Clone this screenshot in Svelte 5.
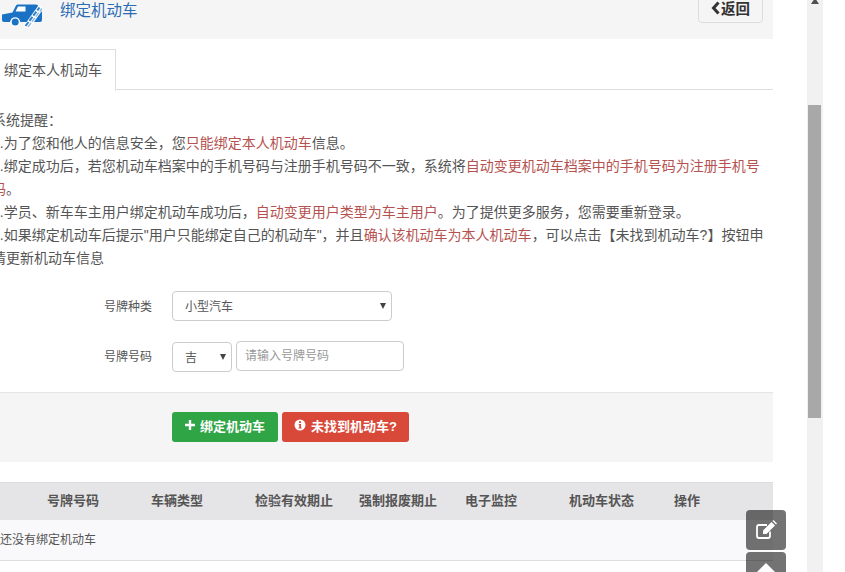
<script>
  const columns = [
    { label: '号牌号码', width: 104 },
    { label: '车辆类型', width: 104 },
    { label: '检验有效期止', width: 104 },
    { label: '强制报废期止', width: 106 },
    { label: '电子监控', width: 104 },
    { label: '机动车状态', width: 105 },
    { label: '操作', width: 80 },
  ];
</script>

<div class="page">
  <main class="main">
    <header class="head">
      <svg class="car" viewBox="0 0 42 26" aria-hidden="true">
        <path fill="#1b72c4" d="M0 12.500 10.500 10.500 14 3.500Q14.500 2.500 16 2.500H34q1.500 0 2.500 1.500L40 10v8q0 2-2 2H18.500a5.500 5.500 0 0 0-10.500 0H2q-2 0-2-2z"/>
        <path fill="#fff" d="M13.500 9.500 16 4.500h7.500v5z"/>
        <circle cx="13.200" cy="20" r="4.800" fill="#fff"/>
        <circle cx="13.200" cy="20" r="3.500" fill="#1b72c4"/>
        <path fill="none" stroke="#fff" stroke-width="6" d="M24 26 39 5"/>
        <path fill="none" stroke="#2f80c9" stroke-width="2" stroke-dasharray="5 1.500" d="M23.500 24 37.500 5.500"/>
        <path fill="none" stroke="#8fbce4" stroke-width="1.500" stroke-dasharray="5 1.500" d="M26 25 40 6.500"/>
      </svg>
      <h1 class="title">绑定机动车</h1>
      <button class="back">
        <svg viewBox="0 0 9 14" aria-hidden="true"><path fill="none" stroke="#333" stroke-width="3" d="M7.500 1.500 2.500 7l5 5.500"/></svg>返回
      </button>
    </header>

    <nav class="tabs">
      <span class="tab">绑定本人机动车</span>
    </nav>

    <section class="notice">
      <p>系统提醒：</p>
      <p>1.为了您和他人的信息安全，您<em>只能绑定本人机动车</em>信息。</p>
      <p>2.绑定成功后，若您机动车档案中的手机号码与注册手机号码不一致，系统将<em>自动变更机动车档案中的手机号码为注册手机号码</em>。</p>
      <p>3.学员、新车车主用户绑定机动车成功后，<em>自动变更用户类型为车主用户</em>。为了提供更多服务，您需要重新登录。</p>
      <p>4.如果绑定机动车后提示"用户只能绑定自己的机动车"，并且<em>确认该机动车为本人机动车</em>，可以点击【未找到机动车?】按钮申请更新机动车信息</p>
    </section>

    <form class="form">
      <div class="row">
        <label class="label" for="plate-type">号牌种类</label>
        <div class="select-wrap wide">
          <select id="plate-type"><option>小型汽车</option></select>
          <i class="caret"></i>
        </div>
      </div>
      <div class="row second">
        <label class="label" for="plate-no">号牌号码</label>
        <div class="select-wrap short">
          <select aria-label="省份"><option>吉</option></select>
          <i class="caret"></i>
        </div>
        <input id="plate-no" placeholder="请输入号牌号码" />
      </div>
    </form>

    <div class="actions">
      <button class="btn green">
        <svg viewBox="0 0 10 10" aria-hidden="true"><path fill="#fff" d="M3.800 0h2.400v3.800H10v2.400H6.200V10H3.800V6.200H0V3.800h3.800z"/></svg>绑定机动车
      </button>
      <button class="btn red">
        <svg viewBox="0 0 12 12" aria-hidden="true"><circle cx="6" cy="6" r="5.500" fill="#fff"/><path fill="#d9493a" d="M5 2.200h2v1.700H5zM4.700 5h2.300v3.500h.7v1H4.500v-1h.8V6h-.6z"/></svg>未找到机动车?
      </button>
    </div>

    <div class="table">
      <div class="thead">
        {#each columns as col}
          <span class="th" style="width: {col.width}px">{col.label}</span>
        {/each}
      </div>
      <div class="tbody">还没有绑定机动车</div>
    </div>
  </main>

  <div class="scrollbar">
    <i class="arrow"></i>
    <div class="thumb"></div>
  </div>

  <button class="float edit" aria-label="编辑">
    <svg viewBox="0 0 22 20" aria-hidden="true">
      <path fill="none" stroke="#fff" stroke-width="1.800" d="M15 11.500V16q0 2-2 2H4q-2 0-2-2V7q0-2 2-2h8"/>
      <path fill="#fff" d="M8 10.500 16.500 2l3.500 3.500-8.500 8.500H8z"/>
      <path fill="#fff" d="M17.500 1l1-1 3.500 3.500-1 1z"/>
    </svg>
  </button>
  <button class="float top" aria-label="返回顶部">
    <svg viewBox="0 0 22 12" aria-hidden="true"><path fill="#fff" d="M11 0l11 11-1 1H1l-1-1z"/></svg>
  </button>
</div>

<style>
  :global(body) {
    margin: 0;
    background: #fff;
    overflow: hidden;
  }

  .page {
    position: relative;
    display: flex;
    width: 845px;
    height: 572px;
    overflow: hidden;
    font-family: "Liberation Sans", "Noto Sans CJK SC", sans-serif;
    font-size: 14px;
    color: #555;
  }

  .main {
    flex: none;
    width: 773px;
  }

  .head {
    display: flex;
    height: 39px;
    background: #f5f5f5;
  }

  .car {
    flex: none;
    width: 42px;
    height: 26px;
    margin: 2px 0 0 2px;
  }

  .title {
    margin: 0 0 0 16px;
    font-size: 15.500px;
    line-height: 22px;
    font-weight: 400;
    color: #2d6cb5;
  }

  .back {
    display: flex;
    align-items: center;
    justify-content: center;
    gap: 1px;
    width: 65px;
    height: 33px;
    margin: -10px 10px 0 auto;
    padding: 0;
    padding-top: 2px;
    border: 1px solid #ddd;
    border-radius: 4px;
    background: #f5f5f5;
    font: 700 14.500px "Liberation Sans", "Noto Sans CJK SC", sans-serif;
    color: #333;
  }

  .back svg {
    width: 9px;
    height: 14px;
  }

  .tabs {
    display: flex;
    height: 40px;
    margin: 10px 0 0 -8px;
    border-bottom: 1px solid #ddd;
  }

  .tab {
    display: block;
    height: 40px;
    padding: 0 13px 0 12px;
    border: 1px solid #ddd;
    border-bottom-color: #fff;
    border-left: 0;
    background: #fff;
    font-size: 14px;
    line-height: 40px;
    color: #555;
  }

  .notice {
    width: 776px;
    margin: 19px 0 0 -8px;
    line-height: 23px;
  }

  .notice p {
    margin: 0;
  }

  .notice em {
    font-style: normal;
    color: #b5524f;
  }

  .form {
    margin-top: 21px;
  }

  .row {
    display: flex;
    align-items: center;
    gap: 4px;
    height: 30px;
  }

  .row.second {
    margin-top: 21px;
  }

  .label {
    width: 48px;
    margin: -2px 16px 0 104px;
    font-size: 12px;
    white-space: nowrap;
  }

  .second .label {
    margin-top: -4px;
  }

  .select-wrap {
    position: relative;
    height: 30px;
  }

  .wide {
    width: 220px;
  }

  .short {
    width: 60px;
  }

  .select-wrap select {
    display: block;
    width: 100%;
    height: 100%;
    padding: 2px 12px 0;
    border: 1px solid #ccc;
    border-radius: 4px;
    background: #fff;
    appearance: none;
    font: 12px "Liberation Sans", "Noto Sans CJK SC", sans-serif;
    color: #555;
  }

  .caret {
    position: absolute;
    top: 12px;
    right: 6px;
    border-top: 6px solid #444;
    border-left: 3px solid transparent;
    border-right: 3px solid transparent;
  }

  input {
    box-sizing: border-box;
    width: 168px;
    height: 30px;
    margin-top: -2px;
    padding: 0 8px;
    border: 1px solid #ccc;
    border-radius: 4px;
    font: 12px "Liberation Sans", "Noto Sans CJK SC", sans-serif;
    color: #555;
  }

  input::placeholder {
    color: #999;
  }

  .actions {
    display: flex;
    gap: 4px;
    box-sizing: border-box;
    height: 70px;
    margin-top: 20px;
    padding: 19px 0 0 172px;
    border-top: 1px solid #e5e5e5;
    background: #f5f5f5;
  }

  .btn {
    display: flex;
    align-items: center;
    justify-content: center;
    gap: 5px;
    height: 30px;
    padding: 0 0 4px;
    border: 1px solid transparent;
    border-radius: 3px;
    font: 700 13px "Liberation Sans", "Noto Sans CJK SC", sans-serif;
    color: #fff;
  }

  .btn svg {
    width: 10px;
    height: 10px;
  }

  .green {
    width: 106px;
    background: #2fa545;
  }

  .red {
    width: 127px;
    background: #d9493a;
  }

  .red svg {
    width: 12px;
    height: 12px;
  }

  .table {
    margin-top: 20px;
  }

  .thead {
    display: flex;
    box-sizing: border-box;
    height: 38px;
    padding-left: 47px;
    border-top: 1px solid #ddd;
    background: #e5e4e7;
    font-size: 12px;
    font-weight: 700;
    line-height: 35px;
    color: #555;
  }

  .th {
    flex: none;
    white-space: nowrap;
    font-size: 13px;
  }

  .tbody {
    box-sizing: border-box;
    height: 41px;
    border-bottom: 1px solid #ddd;
    background: #f9f9fb;
    font-size: 12px;
    line-height: 41px;
    color: #555;
  }

  .scrollbar {
    flex: none;
    position: relative;
    width: 16px;
    height: 572px;
    margin-left: 34px;
    background: #f1f1f1;
  }

  .arrow {
    display: block;
    width: 0;
    margin: -2px auto 0;
    border-bottom: 6px solid #505050;
    border-left: 4px solid transparent;
    border-right: 4px solid transparent;
  }

  .thumb {
    width: 13px;
    height: 313px;
    margin: 101px 0 0 1px;
    background: #a8a8a8;
  }

  .float {
    position: absolute;
    left: 746px;
    display: flex;
    align-items: center;
    justify-content: center;
    width: 40px;
    height: 40px;
    padding: 0;
    border: 0;
    border-radius: 4px;
    background: rgba(0, 0, 0, 0.55);
  }

  .edit {
    top: 510px;
  }

  .edit svg {
    width: 22px;
    height: 20px;
  }

  .top {
    top: 552px;
    align-items: flex-start;
    padding-top: 11px;
  }

  .top svg {
    width: 22px;
    height: 12px;
  }
</style>
